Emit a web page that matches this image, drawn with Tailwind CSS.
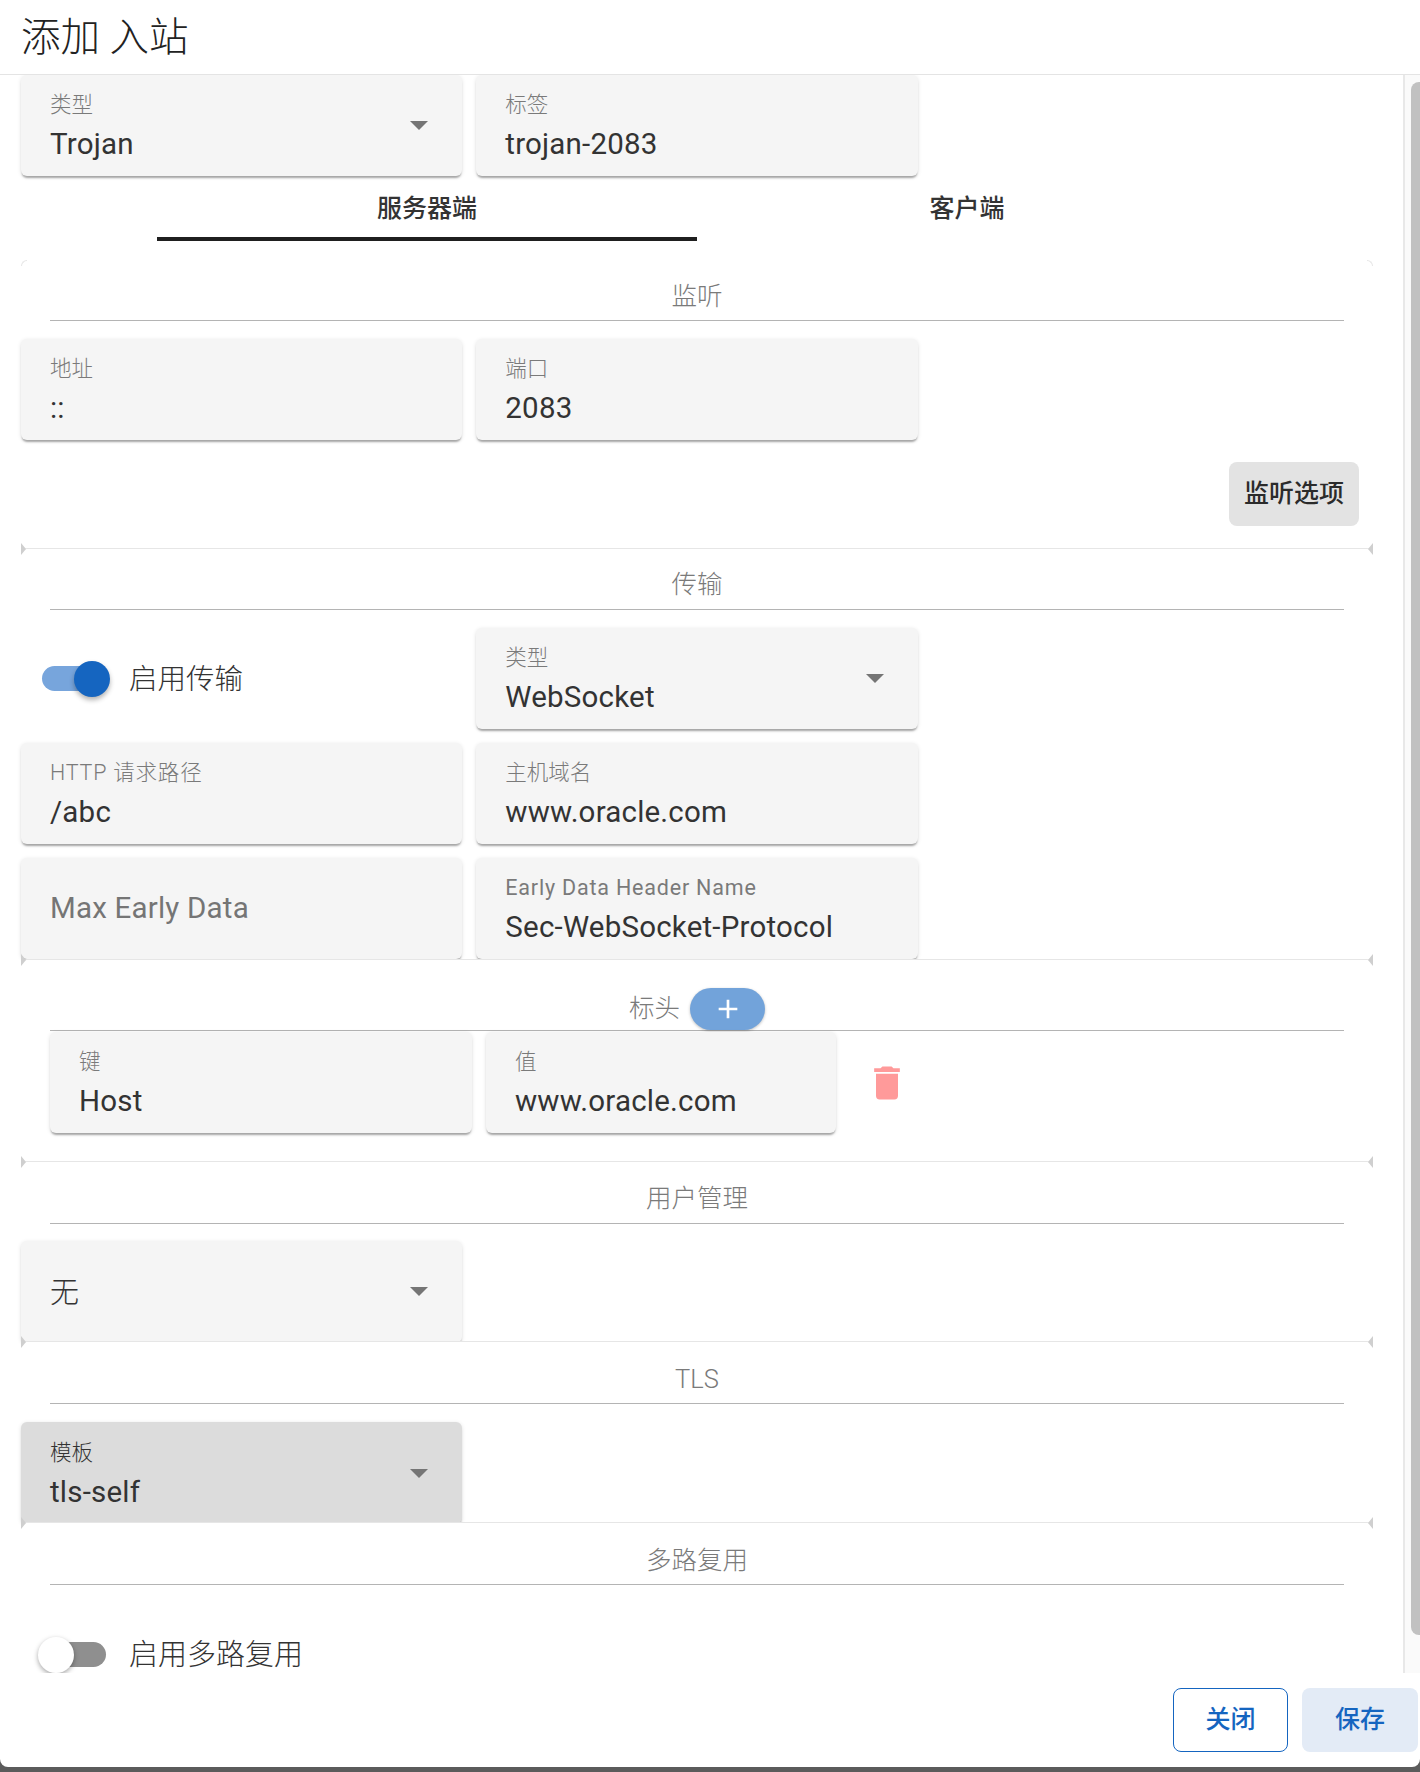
<!DOCTYPE html>
<html lang="zh">
<head>
    <meta charset="UTF-8">
    <title>添加 入站</title>
    <script src="https://cdn.jsdelivr.net/npm/@tailwindcss/browser@4"></script>
</head>
<body class="bg-[#5b5b5b]">
<div class="w-[1420px] h-[1767px] bg-white rounded-b-lg flex flex-col overflow-hidden text-[#333] font-['Roboto','Noto_Sans_CJK_SC',sans-serif]">

    <!-- title -->
    <div class="h-[75px] shrink-0 border-b border-[#e4e4e4] pl-[21px] pt-[1px] flex items-center text-[39.5px] text-[#222] font-light leading-none">添加 入站</div>

    <div class="h-[1598px] shrink-0 flex overflow-hidden">
        <div class="w-[1403px] shrink-0 pl-[21px] pr-[30px]">

            <div class="grid grid-cols-3 gap-x-[14px]">
                <div class="h-[101px] bg-[#f5f5f5] rounded-md shadow-[0_3px_2px_-1px_rgba(0,0,0,0.3),0_1px_4px_rgba(0,0,0,0.12)] pl-[29px] pr-[34px] flex items-center justify-between">
                    <div class="pt-[3px]">
                        <div class="text-[21.5px] leading-[24px] text-[#7a7a7a] font-light">类型</div>
                        <div class="text-[29.5px] tracking-[0.2px] leading-[34px] mt-[10px]">Trojan</div>
                    </div>
                    <svg class="w-[18px] h-[9px] fill-[#757575]" viewBox="0 0 18 9"><path d="M0 0h18l-9 9z"/></svg>
                </div>
                <div class="h-[101px] bg-[#f5f5f5] rounded-md shadow-[0_3px_2px_-1px_rgba(0,0,0,0.3),0_1px_4px_rgba(0,0,0,0.12)] pl-[29px] pt-[3px] flex flex-col justify-center">
                    <div class="text-[21.5px] leading-[24px] text-[#7a7a7a] font-light">标签</div>
                    <div class="text-[29.5px] tracking-[0.2px] leading-[34px] mt-[10px]">trojan-2083</div>
                </div>
            </div>

            <!-- tabs -->
            <div class="w-[1080px] mx-auto grid grid-cols-2 mb-[19px] text-[25px] font-medium">
                <div class="h-[65px] pt-[4px] flex items-center justify-center border-b-4 border-[#1f1f1f]">服务器端</div>
                <div class="h-[65px] pt-[1px] flex items-center justify-center">客户端</div>
            </div>

            <!-- 监听 -->
            <div class="relative h-[288px] bg-white">
                <span class="absolute left-0 top-0 w-[6px] h-[6px] border-t border-l border-[#e6e6e6] rounded-tl-md"></span>
                <span class="absolute right-0 top-0 w-[6px] h-[6px] border-t border-r border-[#e6e6e6] rounded-tr-md"></span>
                <div class="mx-[29px] h-[61px] pb-[9px] flex items-end justify-center border-b border-[#b4b4b4] text-[25.5px] leading-[30px] text-[#7a7a7a] font-light">监听</div>
                <div class="grid grid-cols-3 gap-x-[14px] mt-[18px]">
                    <div class="h-[101px] bg-[#f5f5f5] rounded-md shadow-[0_3px_2px_-1px_rgba(0,0,0,0.3),0_1px_4px_rgba(0,0,0,0.12)] pl-[29px] pt-[3px] flex flex-col justify-center">
                        <div class="text-[21.5px] leading-[24px] text-[#7a7a7a] font-light">地址</div>
                        <div class="text-[29.5px] tracking-[0.2px] leading-[34px] mt-[10px]">::</div>
                    </div>
                    <div class="h-[101px] bg-[#f5f5f5] rounded-md shadow-[0_3px_2px_-1px_rgba(0,0,0,0.3),0_1px_4px_rgba(0,0,0,0.12)] pl-[29px] pt-[3px] flex flex-col justify-center">
                        <div class="text-[21.5px] leading-[24px] text-[#7a7a7a] font-light">端口</div>
                        <div class="text-[29.5px] tracking-[0.2px] leading-[34px] mt-[10px]">2083</div>
                    </div>
                </div>
                <div class="flex justify-end pr-[14px] mt-[22px]">
                    <div class="w-[130px] h-[64px] bg-[#e3e3e3] rounded-lg flex items-center justify-center text-[25px] font-medium text-[#2b2b2b]">监听选项</div>
                </div>
            </div>

            <!-- 传输 -->
            <div class="relative h-[411px] bg-white rounded-md border-t border-[#e6e6e6]">
                <span class="absolute left-0 top-[-6px] border-y-[6px] border-y-transparent border-l-[5px] border-l-[#cfcfcf]"></span>
                <span class="absolute right-0 top-[-6px] border-y-[6px] border-y-transparent border-r-[5px] border-r-[#cfcfcf]"></span>
                <div class="mx-[29px] h-[61px] pb-[10px] flex items-end justify-center border-b border-[#b4b4b4] text-[25.5px] leading-[30px] text-[#7a7a7a] font-light">传输</div>
                <div class="grid grid-cols-3 gap-x-[14px] gap-y-[14px] mt-[18px]">
                    <div class="h-[101px] flex items-center pl-[21px]">
                        <div class="relative w-[64px] h-[25px] rounded-full bg-[#77a5dc]">
                            <span class="absolute right-[-4px] top-[-5px] w-[36px] h-[36px] rounded-full bg-[#1565c0] shadow-[0_3px_5px_rgba(0,0,0,0.3)]"></span>
                        </div>
                        <span class="ml-[23px] pt-[3px] text-[28.5px] font-light">启用传输</span>
                    </div>
                    <div class="h-[101px] bg-[#f5f5f5] rounded-md shadow-[0_3px_2px_-1px_rgba(0,0,0,0.3),0_1px_4px_rgba(0,0,0,0.12)] pl-[29px] pr-[34px] flex items-center justify-between">
                        <div class="pt-[3px]">
                            <div class="text-[21.5px] leading-[24px] text-[#7a7a7a] font-light">类型</div>
                            <div class="text-[29.5px] tracking-[0.2px] leading-[34px] mt-[10px]">WebSocket</div>
                        </div>
                        <svg class="w-[18px] h-[9px] fill-[#757575]" viewBox="0 0 18 9"><path d="M0 0h18l-9 9z"/></svg>
                    </div>
                    <div class="col-start-1 h-[101px] bg-[#f5f5f5] rounded-md shadow-[0_3px_2px_-1px_rgba(0,0,0,0.3),0_1px_4px_rgba(0,0,0,0.12)] pl-[29px] pt-[3px] flex flex-col justify-center">
                        <div class="text-[21.5px] tracking-[0.8px] leading-[24px] text-[#7a7a7a] font-light">HTTP 请求路径</div>
                        <div class="text-[29.5px] tracking-[0.2px] leading-[34px] mt-[10px]">/abc</div>
                    </div>
                    <div class="h-[101px] bg-[#f5f5f5] rounded-md shadow-[0_3px_2px_-1px_rgba(0,0,0,0.3),0_1px_4px_rgba(0,0,0,0.12)] pl-[29px] pt-[3px] flex flex-col justify-center">
                        <div class="text-[21.5px] leading-[24px] text-[#7a7a7a] font-light">主机域名</div>
                        <div class="text-[29.5px] tracking-[0.2px] leading-[34px] mt-[10px]">www.oracle.com</div>
                    </div>
                    <div class="col-start-1 h-[101px] bg-[#f5f5f5] rounded-md shadow-[0_3px_2px_-1px_rgba(0,0,0,0.3),0_1px_4px_rgba(0,0,0,0.12)] pl-[29px] flex items-center text-[29.5px] tracking-[0.2px] text-[#757575]">Max Early Data</div>
                    <div class="h-[101px] bg-[#f5f5f5] rounded-md shadow-[0_3px_2px_-1px_rgba(0,0,0,0.3),0_1px_4px_rgba(0,0,0,0.12)] pl-[29px] pt-[3px] flex flex-col justify-center">
                        <div class="text-[21.5px] leading-[24px] text-[#7a7a7a] tracking-[0.8px]">Early Data Header Name</div>
                        <div class="text-[29.5px] tracking-[0.2px] leading-[34px] mt-[10px]">Sec-WebSocket-Protocol</div>
                    </div>
                </div>
            </div>

            <!-- 标头 -->
            <div class="relative h-[201.5px] bg-white rounded-md border-t border-[#e6e6e6]">
                <span class="absolute left-0 top-[-6px] border-y-[6px] border-y-transparent border-l-[5px] border-l-[#cfcfcf]"></span>
                <span class="absolute right-0 top-[-6px] border-y-[6px] border-y-transparent border-r-[5px] border-r-[#cfcfcf]"></span>
                <div class="mx-[29px] h-[71px] flex items-end justify-center gap-[10px] border-b border-[#b4b4b4] text-[25.5px] text-[#7a7a7a] font-light">
                    <span class="leading-[42px] mb-[1px]">标头</span>
                    <div class="w-[75px] h-[42px] rounded-full bg-[#72a3da] flex items-center justify-center shadow-[0_1px_3px_rgba(0,0,0,0.25)]">
                        <svg class="w-[32px] h-[32px] fill-white" viewBox="0 0 24 24"><path d="M19,13H13V19H11V13H5V11H11V5H13V11H19V13Z"/></svg>
                    </div>
                </div>
                <div class="flex ml-[29px] mt-[1px]">
                    <div class="w-[422px] h-[101px] bg-[#f5f5f5] rounded-md shadow-[0_3px_2px_-1px_rgba(0,0,0,0.3),0_1px_4px_rgba(0,0,0,0.12)] pl-[29px] pt-[3px] flex flex-col justify-center">
                        <div class="text-[21.5px] leading-[24px] text-[#7a7a7a] font-light">键</div>
                        <div class="text-[29.5px] tracking-[0.2px] leading-[34px] mt-[10px]">Host</div>
                    </div>
                    <div class="w-[350px] ml-[14px] h-[101px] bg-[#f5f5f5] rounded-md shadow-[0_3px_2px_-1px_rgba(0,0,0,0.3),0_1px_4px_rgba(0,0,0,0.12)] pl-[29px] pt-[3px] flex flex-col justify-center">
                        <div class="text-[21.5px] leading-[24px] text-[#7a7a7a] font-light">值</div>
                        <div class="text-[29.5px] tracking-[0.2px] leading-[34px] mt-[10px]">www.oracle.com</div>
                    </div>
                    <svg class="w-[44px] h-[44px] ml-[29px] mt-[29px] fill-[#ff9a9a]" viewBox="0 0 24 24"><path d="M19,4H15.5L14.5,3H9.5L8.5,4H5V6H19M6,19A2,2 0 0,0 8,21H16A2,2 0 0,0 18,19V7H6V19Z"/></svg>
                </div>
            </div>

            <!-- 用户管理 -->
            <div class="relative h-[180.5px] bg-white rounded-md border-t border-[#e6e6e6]">
                <span class="absolute left-0 top-[-6px] border-y-[6px] border-y-transparent border-l-[5px] border-l-[#cfcfcf]"></span>
                <span class="absolute right-0 top-[-6px] border-y-[6px] border-y-transparent border-r-[5px] border-r-[#cfcfcf]"></span>
                <div class="mx-[29px] h-[62px] pb-[10px] flex items-end justify-center border-b border-[#b4b4b4] text-[25.5px] leading-[30px] text-[#7a7a7a] font-light">用户管理</div>
                <div class="grid grid-cols-3 gap-x-[14px] mt-[17px]">
                    <div class="h-[102px] bg-[#f5f5f5] rounded-md shadow-[0_3px_2px_-1px_rgba(0,0,0,0.3),0_1px_4px_rgba(0,0,0,0.12)] pl-[29px] pr-[34px] flex items-center justify-between">
                        <span class="text-[29px] font-light pt-[4px]">无</span>
                        <svg class="w-[18px] h-[9px] fill-[#757575]" viewBox="0 0 18 9"><path d="M0 0h18l-9 9z"/></svg>
                    </div>
                </div>
            </div>

            <!-- TLS -->
            <div class="relative h-[181px] bg-white rounded-md border-t border-[#e6e6e6]">
                <span class="absolute left-0 top-[-6px] border-y-[6px] border-y-transparent border-l-[5px] border-l-[#cfcfcf]"></span>
                <span class="absolute right-0 top-[-6px] border-y-[6px] border-y-transparent border-r-[5px] border-r-[#cfcfcf]"></span>
                <div class="mx-[29px] h-[62px] pb-[9px] flex items-end justify-center border-b border-[#b4b4b4] text-[25.5px] leading-[30px] text-[#7a7a7a] font-light">TLS</div>
                <div class="grid grid-cols-3 gap-x-[14px] mt-[18px]">
                    <div class="h-[102px] bg-[#dcdcdc] rounded-md shadow-[0_3px_2px_-1px_rgba(0,0,0,0.3),0_1px_4px_rgba(0,0,0,0.12)] pl-[29px] pr-[34px] flex items-center justify-between">
                        <div class="pt-[3px]">
                            <div class="text-[21.5px] leading-[24px] text-[#333] font-light">模板</div>
                            <div class="text-[29.5px] tracking-[0.2px] leading-[34px] mt-[10px]">tls-self</div>
                        </div>
                        <svg class="w-[18px] h-[9px] fill-[#757575]" viewBox="0 0 18 9"><path d="M0 0h18l-9 9z"/></svg>
                    </div>
                </div>
            </div>

            <!-- 多路复用 -->
            <div class="relative h-[160px] bg-white rounded-md border-t border-[#e6e6e6]">
                <span class="absolute left-0 top-[-6px] border-y-[6px] border-y-transparent border-l-[5px] border-l-[#cfcfcf]"></span>
                <span class="absolute right-0 top-[-6px] border-y-[6px] border-y-transparent border-r-[5px] border-r-[#cfcfcf]"></span>
                <div class="mx-[29px] h-[62px] pb-[9px] flex items-end justify-center border-b border-[#b4b4b4] text-[25.5px] leading-[30px] text-[#7a7a7a] font-light">多路复用</div>
                <div class="h-[101px] mt-[19px] flex items-center pl-[21px]">
                    <div class="relative w-[64px] h-[25px] rounded-full bg-[#8f8f8f]">
                        <span class="absolute left-[-4px] top-[-5px] w-[36px] h-[36px] rounded-full bg-white shadow-[0_2px_5px_rgba(0,0,0,0.35)]"></span>
                    </div>
                    <span class="ml-[23px] pt-[2px] text-[29px] font-light">启用多路复用</span>
                </div>
            </div>
        </div>

        <!-- scrollbar -->
        <div class="w-[17px] shrink-0 border-l-2 border-[#e8e8e8] bg-[#fafafa] pl-[6px] pt-[7px]">
            <div class="h-[1553px] bg-[#c1c1c1] rounded-l-lg"></div>
        </div>
    </div>

    <!-- actions -->
    <div class="flex-1 flex justify-end items-start gap-[14px] pt-[15px] pr-[2px] text-[25px] font-medium text-[#1565c0]">
        <div class="w-[115px] h-[64px] border border-[#1565c0] rounded-lg flex items-center justify-center">关闭</div>
        <div class="w-[116px] h-[64px] bg-[#e3ebf6] rounded-lg flex items-center justify-center">保存</div>
    </div>
</div>
</body>
</html>
